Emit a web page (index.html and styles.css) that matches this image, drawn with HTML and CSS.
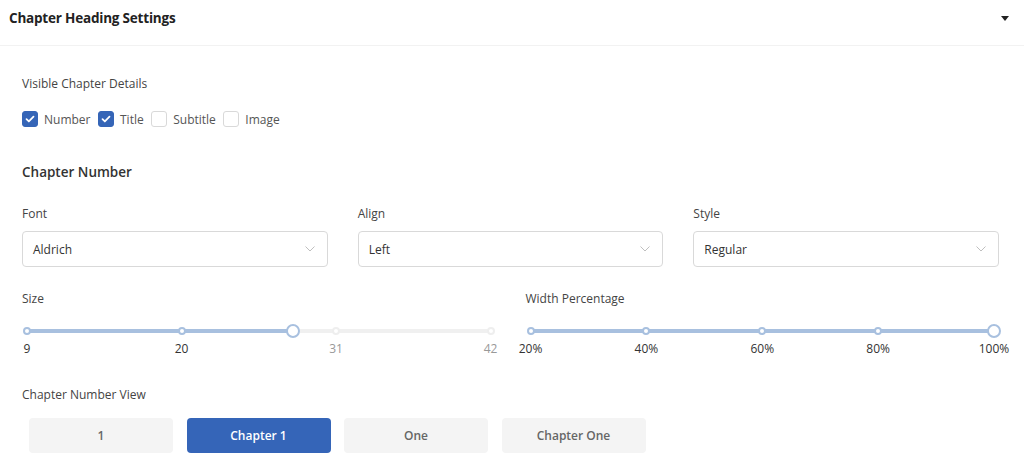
FILE: index.html
```html
<!DOCTYPE html>
<html>
<head>
<meta charset="utf-8">
<link rel="stylesheet" href="styles.css">
</head>
<body>
<div class="panel">
  <div class="header">
    <span class="header-title">Chapter Heading Settings</span>
    <span class="caret"></span>
  </div>
  <div class="content">
    <div class="label first">Visible Chapter Details</div>
    <div class="checks">
      <label class="check"><span class="box on"><svg viewBox="0 0 16 16" width="16" height="16"><path d="M4 8.2l2.7 2.6L12 5.4" fill="none" stroke="#fff" stroke-width="2" stroke-linecap="round" stroke-linejoin="round"/></svg></span>Number</label>
      <label class="check"><span class="box on"><svg viewBox="0 0 16 16" width="16" height="16"><path d="M4 8.2l2.7 2.6L12 5.4" fill="none" stroke="#fff" stroke-width="2" stroke-linecap="round" stroke-linejoin="round"/></svg></span>Title</label>
      <label class="check"><span class="box"></span>Subtitle</label>
      <label class="check"><span class="box"></span>Image</label>
    </div>

    <div class="section-title">Chapter Number</div>

    <div class="selects">
      <div class="field">
        <div class="label">Font</div>
        <div class="select"><span>Aldrich</span><svg class="chev" viewBox="0 0 10 6" width="10" height="6"><path d="M0.5 0.5L5 5L9.5 0.5" fill="none" stroke="#bfbfbf" stroke-width="1"/></svg></div>
      </div>
      <div class="field">
        <div class="label">Align</div>
        <div class="select"><span>Left</span><svg class="chev" viewBox="0 0 10 6" width="10" height="6"><path d="M0.5 0.5L5 5L9.5 0.5" fill="none" stroke="#bfbfbf" stroke-width="1"/></svg></div>
      </div>
      <div class="field">
        <div class="label">Style</div>
        <div class="select"><span>Regular</span><svg class="chev" viewBox="0 0 10 6" width="10" height="6"><path d="M0.5 0.5L5 5L9.5 0.5" fill="none" stroke="#bfbfbf" stroke-width="1"/></svg></div>
      </div>
    </div>

    <div class="sliders">
      <div class="field">
        <div class="label">Size</div>
        <div class="slider">
          <div class="track">
            <div class="fill" style="width:57.3%"></div>
            <div class="dots">
              <span class="dot on"></span><span class="dot on"></span><span class="dot"></span><span class="dot"></span>
            </div>
            <span class="handle" style="left:57.3%"></span>
          </div>
        </div>
        <div class="marks">
          <span class="on">9</span><span class="on">20</span><span>31</span><span>42</span>
        </div>
      </div>
      <div class="field">
        <div class="label">Width Percentage</div>
        <div class="slider">
          <div class="track">
            <div class="fill" style="width:100%"></div>
            <div class="dots">
              <span class="dot on"></span><span class="dot on"></span><span class="dot on"></span><span class="dot on"></span><span class="dot on"></span>
            </div>
            <span class="handle" style="left:100%"></span>
          </div>
        </div>
        <div class="marks">
          <span class="on">20%</span><span class="on">40%</span><span class="on">60%</span><span class="on">80%</span><span class="on">100%</span>
        </div>
      </div>
    </div>

    <div class="label view-label">Chapter Number View</div>
    <div class="views">
      <button class="view">1</button>
      <button class="view active">Chapter 1</button>
      <button class="view">One</button>
      <button class="view">Chapter One</button>
    </div>
  </div>
</div>
</body>
</html>
```

FILE: styles.css
```css
* { box-sizing: border-box; }

body {
  margin: 0;
  background: #fff;
  font-family: "Open Sans", "Noto Sans", sans-serif;
  color: #333;
}

.header {
  height: 46px;
  padding: 0 15px 9px 9px;
  border-bottom: 1px solid #f2f2f2;
  display: flex;
  align-items: center;
  justify-content: space-between;
}

.header-title {
  font-size: 13.5px;
  font-weight: 700;
  color: #222;
  letter-spacing: -0.2px;
}

.caret {
  width: 0;
  height: 0;
  border-left: 4px solid transparent;
  border-right: 4px solid transparent;
  border-top: 5px solid #222;
}

.content {
  padding: 0 25px 0 22px;
}

.label {
  font-size: 12px;
  line-height: 20px;
  color: #444;
}

.label.first { margin-top: 28px; }

.checks {
  margin-top: 15px;
  display: flex;
  align-items: center;
  height: 20px;
}

.check {
  display: flex;
  align-items: center;
  font-size: 12px;
  color: #555;
  margin-right: 7.5px;
}

.box {
  width: 16px;
  height: 16px;
  border-radius: 3px;
  border: 1px solid #d9d9d9;
  background: #fff;
  margin-right: 6px;
  display: flex;
  align-items: center;
  justify-content: center;
}

.box.on {
  background: #3565b7;
  border-color: #3565b7;
}

.section-title {
  margin-top: 33px;
  font-size: 13.5px;
  line-height: 20px;
  font-weight: 600;
  color: #333;
}

.selects {
  margin-top: 22px;
  display: grid;
  grid-template-columns: repeat(3, 1fr);
  column-gap: 30px;
}

.select {
  margin-top: 7px;
  height: 36px;
  border: 1px solid #d9d9d9;
  border-radius: 4px;
  padding: 0 12px 0 10px;
  display: flex;
  align-items: center;
  justify-content: space-between;
  font-size: 12px;
  color: #333;
}

.sliders {
  margin-top: 22px;
  display: grid;
  grid-template-columns: 1fr 1fr;
  column-gap: 30px;
}

.slider {
  margin-top: 14px;
  height: 16px;
  padding: 0 5px;
  display: flex;
  align-items: center;
}

.track {
  position: relative;
  flex: 1;
  height: 4px;
  background: #f0f0f0;
  border-radius: 2px;
}

.fill {
  height: 4px;
  background: #a8c0df;
  border-radius: 2px;
}

.dots {
  position: absolute;
  top: -2px;
  left: -4px;
  right: -4px;
  display: flex;
  justify-content: space-between;
}

.dot {
  width: 8px;
  height: 8px;
  border-radius: 50%;
  background: #fff;
  border: 2px solid #eeeeee;
}

.dot.on { border-color: #a8c0df; }

.handle {
  position: absolute;
  top: -5px;
  width: 14px;
  height: 14px;
  margin-left: -7px;
  border-radius: 50%;
  background: #fff;
  border: 2px solid #a8c0df;
}

.marks {
  margin-top: 0;
  padding: 0 5px;
  display: flex;
  justify-content: space-between;
  font-size: 12px;
  line-height: 20px;
  color: #999;
}

.marks span {
  width: 0;
  display: flex;
  justify-content: center;
  white-space: nowrap;
}

.marks span.on { color: #333; }

.view-label { margin-top: 26px; }

.views {
  margin-top: 13px;
  padding-left: 7px;
  display: flex;
  gap: 13.5px;
}

.view {
  width: 144px;
  height: 35px;
  border: none;
  border-radius: 4px;
  background: #f4f4f4;
  font-family: inherit;
  font-size: 12px;
  font-weight: 600;
  color: #666;
  padding: 0;
}

.view.active {
  background: #3565b8;
  color: #fff;
}
```
